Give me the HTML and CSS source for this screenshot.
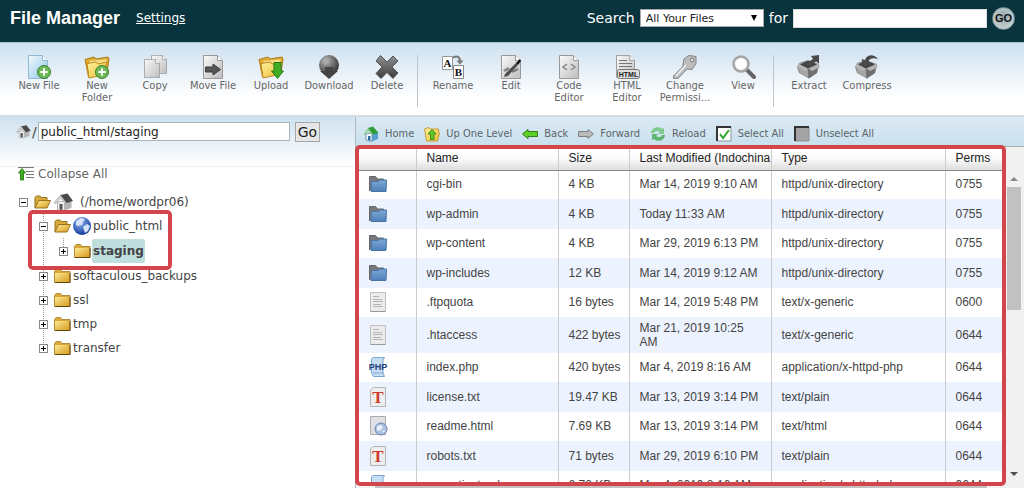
FILE: index.html
```html
<!DOCTYPE html>
<html lang="en">
<head>
  <meta charset="UTF-8">
  <meta name="viewport" content="width=device-width, initial-scale=1.0">
  <title>File Manager</title>
  <link rel="stylesheet" href="styles.css">
</head>
<body>

<!-- Shared icons -->
<svg class="sprite" width="0" height="0" aria-hidden="true">
  <defs>
    <linearGradient id="gold" x1="0" y1="0" x2="1" y2="1"><stop offset="0" stop-color="#fdeb96"/><stop offset="1" stop-color="#d89a1c"/></linearGradient>
    <linearGradient id="yellow" x1="0" y1="0" x2="1" y2="1"><stop offset="0" stop-color="#fff3a0"/><stop offset="1" stop-color="#ecb930"/></linearGradient>
    <linearGradient id="paper" x1="0" y1="0" x2="1" y2="1"><stop offset="0" stop-color="#fafafa"/><stop offset="1" stop-color="#bdbdbd"/></linearGradient>
    <linearGradient id="bluePaper" x1="0" y1="0" x2="1" y2="1"><stop offset="0" stop-color="#f2fafe"/><stop offset="1" stop-color="#8fc6e8"/></linearGradient>
    <linearGradient id="dark" x1="0" y1="0" x2="0" y2="1"><stop offset="0" stop-color="#929292"/><stop offset="1" stop-color="#3c3c3c"/></linearGradient>
    <linearGradient id="blueFolder" x1="0" y1="0" x2="0" y2="1"><stop offset="0" stop-color="#7fa9d8"/><stop offset="1" stop-color="#4d7fb8"/></linearGradient>
    <radialGradient id="ball" cx=".35" cy=".3" r=".7"><stop offset="0" stop-color="#b5b5b5"/><stop offset="1" stop-color="#3a3a3a"/></radialGradient>
    <radialGradient id="earth" cx=".4" cy=".3" r=".7"><stop offset="0" stop-color="#8fb5f5"/><stop offset="1" stop-color="#123a9a"/></radialGradient>

    <symbol id="folder" viewBox="0 0 17 16">
      <path d="M.5 3.5 2 1.5h4.5l1.500 2h8v11H.5z" fill="#d9a93a" stroke="#b58c34"/>
      <path d="M1 5h14.500v9H1z" fill="url(#gold)"/>
      <path d="M16 5v9.500H1" fill="none" stroke="#5d4614"/>
    </symbol>
    <symbol id="folder-open" viewBox="0 0 17 16">
      <path d="M1 14V3.500L2.500 2H6l1.500 1.500H13V6" fill="#d9a93a" stroke="#94701f"/>
      <path d="M1 14 4.500 6.500h12L13 14z" fill="url(#gold)" stroke="#94701f"/>
    </symbol>
    <symbol id="house" viewBox="0 0 20 18">
      <path d="M4 9v8l7 .5V8z" fill="#f2f2f2" stroke="#999" stroke-width=".7"/>
      <path d="M11 17.500 18 15V7l-5-3-2 4z" fill="#b5b5b5"/>
      <path d="M6 11h3v6l-3-.5z" fill="#555"/>
      <path d="M.5 9.500 7 2l6 7.500-1.500 1L7 5l-5 6z" fill="#d5d5d5" stroke="#999" stroke-width=".6"/>
      <path d="M7 2l7-1.500L19.500 8 13 10z" fill="#4a4a4a"/>
    </symbol>
    <symbol id="big-folder" viewBox="0 0 26 24">
      <path d="M1 4.500 10 2l2 2 12-2 1 2-2 14H4z" fill="#e6ac2c" stroke="#a77b1a"/>
      <path d="M5 5.500 23 4l-1 12H6z" fill="#f8df80" stroke="#cba548" stroke-width=".6"/>
      <path d="M3 8.500 12 7l2 2 9-2-4 13-14 3z" fill="url(#yellow)" stroke="#b88a24"/>
      <path d="M1 5l2 3.500L5 22l-1 .5z" fill="#c58c1c"/>
    </symbol>
    <symbol id="plus" viewBox="0 0 15 15">
      <circle cx="7.500" cy="7.500" r="7" fill="#6db855" stroke="#34802a"/>
      <path d="M7.500 3.500v8M3.500 7.500h8" stroke="#fff" stroke-width="2"/>
    </symbol>
    <symbol id="page" viewBox="0 0 20 24">
      <path d="M.5.5h14l5 5v18H.5z" fill="url(#paper)" stroke="#999"/>
      <path d="M14.500.5v5h5" fill="#fff" stroke="#999"/>
    </symbol>
    <symbol id="box" viewBox="0 0 26 24">
      <path d="M1 12 3 8l9-3 11 4v2l-2 7-8 5.500L3 18z" fill="#8c8c8c"/>
      <path d="M2 10 12 14.500V23L4 18z" fill="#a5a5a5"/>
      <path d="M12 14.500 22 10l-1 8-8.500 5.500z" fill="#707070"/>
      <path d="M4 9.500 12 6l8 3-8 4z" fill="#3d3d3d"/>
      <path d="M3 8.500 1 12l8 4 3-3 4 3 8-4-2-3" fill="#b4b4b4"/>
      <path d="M4 9.500 12 6l9 3.500-9 4z" fill="#444"/>
    </symbol>

    <symbol id="dir" viewBox="0 0 20 20">
      <path d="M1.500 17V2.500h6l2 2.500h6V9" fill="#77797c" stroke="#63666a"/>
      <path d="M3.500 7.500h7l1-1.500h7l-.5 11.500H3z" fill="url(#blueFolder)" stroke="#4874a8"/>
    </symbol>
    <symbol id="generic" viewBox="0 0 20 20">
      <path d="M2.500.5h15v19h-15z" fill="#ebebeb" stroke="#c0c0c0"/>
      <path d="M5 4.500h6M5 7.500h9M5 9.500h10M5 12.500h8M5 14.500h10" stroke="#b4b4b4"/>
      <path d="M2.500 19.500h15" stroke="#999"/>
    </symbol>
    <symbol id="php" viewBox="0 0 20 20">
      <path d="M3.500 2 5 .5h11.500L15 3v13l1.500 3.500h-11L3.500 16z" fill="#c6def3" stroke="#7da4cc"/>
      <path d="M5 16h10" stroke="#7da4cc"/>
      <text x="10" y="13" class="php-text">PHP</text>
    </symbol>
    <symbol id="txt" viewBox="0 0 20 20">
      <path d="M2.500 3 5.500.5h12v19h-15z" fill="#eee" stroke="#b5b5b5"/>
      <text x="10" y="16" class="txt-text">T</text>
    </symbol>
    <symbol id="html" viewBox="0 0 20 20">
      <path d="M2.500.5h15v18h-15z" fill="#dfe1e5" stroke="#aaa"/>
      <circle cx="13" cy="13" r="6" fill="#a9bfe0" stroke="#6e86ae"/>
      <path d="M9 10l4-1 2 2-2 3-3 1-1-2zM14 15l3-1-1 3z" fill="#e9f1fb"/>
    </symbol>
  </defs>
</svg>

<header class="header">
  <h1>File Manager</h1>
  <a class="settings" href="#">Settings</a>
  <form class="search">
    <label for="scope">Search</label>
    <span class="select-wrap">
      <select id="scope">
        <option>All Your Files</option>
        <option>Current Directory</option>
      </select>
    </span>
    <label for="query">for</label>
    <input type="text" id="query">
    <button type="button" class="go-round">GO</button>
  </form>
</header>

<nav class="toolbar">
  <button class="tool">
    <svg width="26" height="24" viewBox="0 0 26 24"><path d="M2.500.5h14l5 5v18h-19z" fill="url(#bluePaper)" stroke="#8fb8d2"/><path d="M16.500.5v5h5" fill="#fff" stroke="#8fb8d2"/><use href="#plus" x="11" y="10" width="14" height="14"/></svg>
    New File
  </button>
  <button class="tool">
    <svg width="26" height="24" viewBox="0 0 26 24"><use href="#big-folder" width="26" height="24"/><use href="#plus" x="11" y="10" width="14" height="14"/></svg>
    New Folder
  </button>
  <button class="tool">
    <svg width="26" height="24" viewBox="0 0 26 24"><use href="#page" x="9" y="0" width="16" height="19"/><use href="#page" x="2" y="4" width="16" height="19"/></svg>
    Copy
  </button>
  <button class="tool">
    <svg width="26" height="24" viewBox="0 0 26 24"><use href="#page" x="3" y="0" width="20" height="24"/><path d="M5.500 12H13V9l7.500 5.500L13 20v-3H5.500z" fill="#555" stroke="#3a3a3a"/></svg>
    Move File
  </button>
  <button class="tool">
    <svg width="26" height="24" viewBox="0 0 26 24"><use href="#big-folder" width="26" height="24"/><path d="M16 7.500h7V16h2.500l-6 7.500-6-7.500H16z" fill="#3fae22" stroke="#2b7a16"/></svg>
    Upload
  </button>
  <button class="tool">
    <svg width="26" height="24" viewBox="0 0 26 24"><circle cx="13" cy="10" r="10" fill="url(#ball)"/><path d="M6 5l4-3 4 2-1 4-4 2-2-1z" fill="#aaa" opacity=".6"/><path d="M9 12h8v4h5l-9 8-9-8h5z" fill="#444"/></svg>
    Download
  </button>
  <button class="tool">
    <svg width="26" height="24" viewBox="0 0 26 24"><path d="M6.500.5 13 7l6-6 5 5-6 6 6 6-5 5.500-6-6-6 6-5-5L8 12 2 6z" fill="url(#dark)" stroke="#555"/></svg>
    Delete
  </button>
  <span class="divider"></span>
  <button class="tool">
    <svg width="26" height="24" viewBox="0 0 26 24"><path d="M2.500 1.500h10v13h-10z" fill="#fff" stroke="#999"/><path d="M13.500 10.500h10v13h-10z" fill="#fff" stroke="#888"/><text x="7.500" y="12" class="letter">A</text><text x="18.500" y="21" class="letter">B</text><path d="M13 2.500c4-2 7-1 7 4" fill="none" stroke="#777" stroke-width="2"/><path d="M16.500 5.500h7L20 9.500z" fill="#777"/></svg>
    Rename
  </button>
  <button class="tool">
    <svg width="26" height="24" viewBox="0 0 26 24"><use href="#page" x="3" y="0" width="20" height="24"/><path d="m5 15 5-3 2 2-5 3z" fill="#888"/><path d="M7 19 18 8l2 2-10 11-4 1z" fill="#4c4c4c"/><path d="M14 17l6-3" stroke="#777" stroke-width="2"/><path d="m18 8 4-4 1 2-3 4z" fill="#111"/></svg>
    Edit
  </button>
  <button class="tool">
    <svg width="26" height="24" viewBox="0 0 26 24"><use href="#page" x="3" y="0" width="20" height="24"/><path d="m11 9-4 3 4 3M15 9l4 3-4 3" fill="none" stroke="#888" stroke-width="1.500"/></svg>
    Code Editor
  </button>
  <button class="tool">
    <svg width="26" height="24" viewBox="0 0 26 24"><use href="#page" x="2" y="0" width="19" height="23"/><path d="M5 5.500h8M5 8.500h13M5 11.500h13" stroke="#777"/><rect x="3.500" y="14.500" width="22" height="9" rx="2" fill="#ddd" stroke="#777"/><text x="14.500" y="22" class="html-text">HTML</text></svg>
    HTML Editor
  </button>
  <button class="tool">
    <svg width="26" height="24" viewBox="0 0 26 24"><path d="M12 4 17 .5l7 1v7l-4 6-5-.5-9 9.500-4.500.5v-3l9-9z" fill="#bdbdbd" stroke="#858585"/><path d="M4 21 14 10" stroke="#eee" stroke-width="1.500"/><circle cx="20" cy="5" r="1.800" fill="#e3edf5" stroke="#777"/></svg>
    Change Permissi...
  </button>
  <button class="tool">
    <svg width="26" height="24" viewBox="0 0 26 24"><path d="m17 15 7 7" stroke="#666" stroke-width="4" stroke-linecap="round"/><circle cx="11" cy="9" r="7.500" fill="#f1f6fa" stroke="#a5a5a5" stroke-width="2.500"/><circle cx="11" cy="9" r="5" fill="#fff"/></svg>
    View
  </button>
  <span class="divider"></span>
  <button class="tool">
    <svg width="26" height="24" viewBox="0 0 26 24"><use href="#box" width="26" height="24"/><path d="m9 9 4 2.500 7-5 3 2V0l-8 1 2 3z" fill="#4a4a4a"/></svg>
    Extract
  </button>
  <button class="tool">
    <svg width="26" height="24" viewBox="0 0 26 24"><use href="#box" width="26" height="24"/><path d="M24 4C20-1 13-1 11 5L7.500 4l2 8 8-4-3-1.500c1-3.500 5-4 9.500-2.500z" fill="#4a4a4a"/></svg>
    Compress
  </button>
</nav>

<main class="main">
  <aside class="sidebar">
    <form class="location">
      <svg width="15" height="15"><use href="#house"/></svg>
      <label for="path">/</label>
      <input type="text" id="path" value="public_html/staging">
      <button type="button">Go</button>
    </form>

    <a class="collapse" href="#">
      <svg width="17" height="14" viewBox="0 0 17 14"><path d="M1 .5h16M9 4.500h8M9 7.500h8M9 10.500h8" stroke="#777"/><path d="M5 1.500 8.500 6h-2v7h-3V6h-2z" fill="#3fae22" stroke="#2f8518"/></svg>
      Collapse All
    </a>

    <div class="tree">
      <ul>
        <li>
          <div class="node">
            <button class="toggle" aria-label="Collapse"><svg width="7" height="7"><path d="M1 3.500h5"/></svg></button>
            <svg width="17" height="16"><use href="#folder-open"/></svg>
            <svg width="21" height="18"><use href="#house"/></svg>
            <a class="root" href="#">(/home/wordpr06)</a>
          </div>
          <ul>
            <li>
              <div class="node">
                <button class="toggle" aria-label="Collapse"><svg width="7" height="7"><path d="M1 3.500h5"/></svg></button>
                <svg width="17" height="16"><use href="#folder-open"/></svg>
                <svg width="18" height="18" viewBox="0 0 18 18"><circle cx="9" cy="9" r="9" fill="url(#earth)"/><path d="M3 4l5-3 4 1-2 3-1 3-4 1-2-1zM10 10l4-3 3 2-2 5-3 2z" fill="#d5e4fa"/></svg>
                <a href="#">public_html</a>
              </div>
              <ul>
                <li>
                  <div class="node current">
                    <button class="toggle" aria-label="Expand"><svg width="7" height="7"><path d="M1 3.500h5M3.500 1v5"/></svg></button>
                    <svg width="17" height="16"><use href="#folder"/></svg>
                    <a href="#">staging</a>
                  </div>
                </li>
              </ul>
            </li>
            <li>
              <div class="node">
                <button class="toggle" aria-label="Expand"><svg width="7" height="7"><path d="M1 3.500h5M3.500 1v5"/></svg></button>
                <svg width="17" height="16"><use href="#folder"/></svg>
                <a href="#">softaculous_backups</a>
              </div>
            </li>
            <li>
              <div class="node">
                <button class="toggle" aria-label="Expand"><svg width="7" height="7"><path d="M1 3.500h5M3.500 1v5"/></svg></button>
                <svg width="17" height="16"><use href="#folder"/></svg>
                <a href="#">ssl</a>
              </div>
            </li>
            <li>
              <div class="node">
                <button class="toggle" aria-label="Expand"><svg width="7" height="7"><path d="M1 3.500h5M3.500 1v5"/></svg></button>
                <svg width="17" height="16"><use href="#folder"/></svg>
                <a href="#">tmp</a>
              </div>
            </li>
            <li>
              <div class="node">
                <button class="toggle" aria-label="Expand"><svg width="7" height="7"><path d="M1 3.500h5M3.500 1v5"/></svg></button>
                <svg width="17" height="16"><use href="#folder"/></svg>
                <a href="#">transfer</a>
              </div>
            </li>
          </ul>
        </li>
      </ul>
      <div class="highlight tree-highlight"></div>
    </div>
  </aside>

  <section class="files">
    <nav class="actions">
      <a href="#"><svg width="16" height="16" viewBox="0 0 16 16"><path d="M3 8v6l6 1.500V7z" fill="#fff" stroke="#6c9ab8"/><path d="M9 15.500 15 13V6l-4-2-2 4z" fill="#5a9fd0"/><path d="M5 10h2.500v5L5 14z" fill="#2d6ea0"/><path d="M.5 8 5 2l5 6.500-1.500.5L5 5 1.500 9z" fill="#8fd08a"/><path d="m5 2 5-1.500L15.500 7 10 8.500z" fill="#2f9a3a"/></svg>Home</a>
      <a href="#"><svg width="16" height="16" viewBox="0 0 16 16"><path d="M.5 3 5 1.500 6.500 3h8v3l1 1-2 8h-11z" fill="url(#yellow)" stroke="#c49a34"/><path d="M8 3.500 12 8h-2v5.500H6.500V8H4z" fill="#62c72a" stroke="#3a8d17"/></svg>Up One Level</a>
      <a href="#"><svg width="16" height="16" viewBox="0 0 16 16"><path d="M.5 8 6 3.500v2h9.500v5H6v2z" fill="#5fd028" stroke="#2b7d14"/></svg>Back</a>
      <a href="#"><svg width="16" height="16" viewBox="0 0 16 16"><path d="M15.500 8 10 3.500v2H.5v5H10v2z" fill="#bbb" stroke="#808080"/></svg>Forward</a>
      <a href="#"><svg width="16" height="16" viewBox="0 0 16 16"><path d="M1 7C1 2 8-1 12 3l2-1v6H8l2-2C7 4 5 5 4 7z" fill="#7fca8c"/><path d="M15 9c0 5-7 8-11 4l-2 1V8h6l-2 2c3 2 5 1 6-1z" fill="#5fb573"/></svg>Reload</a>
      <a href="#"><svg width="16" height="16" viewBox="0 0 16 16"><path d="M1 1h14v14H1z" fill="#fff" stroke="#8a959c"/><path d="M1 15V1h14" fill="none" stroke="#333" stroke-width="2"/><path d="m4 8 3 4 6-8" fill="none" stroke="#2fa52f" stroke-width="2"/></svg>Select All</a>
      <a href="#"><svg width="16" height="16" viewBox="0 0 16 16"><path d="M1 1h14v14H1z" fill="#a3a3a3" stroke="#8f8f8f"/><path d="M1 15V1h14" fill="none" stroke="#333" stroke-width="2"/></svg>Unselect All</a>
    </nav>

    <div class="list">
      <div class="list-view">
        <table>
          <colgroup>
            <col class="col-icon"><col class="col-name"><col class="col-size"><col class="col-date"><col class="col-type"><col>
          </colgroup>
          <thead>
            <tr><th></th><th>Name</th><th>Size</th><th>Last Modified (Indochina</th><th>Type</th><th>Perms</th></tr>
          </thead>
          <tbody>
            <tr><td><svg width="20" height="20"><use href="#dir"/></svg></td><td>cgi-bin</td><td>4 KB</td><td>Mar 14, 2019 9:10 AM</td><td>httpd/unix-directory</td><td>0755</td></tr>
            <tr><td><svg width="20" height="20"><use href="#dir"/></svg></td><td>wp-admin</td><td>4 KB</td><td>Today 11:33 AM</td><td>httpd/unix-directory</td><td>0755</td></tr>
            <tr><td><svg width="20" height="20"><use href="#dir"/></svg></td><td>wp-content</td><td>4 KB</td><td>Mar 29, 2019 6:13 PM</td><td>httpd/unix-directory</td><td>0755</td></tr>
            <tr><td><svg width="20" height="20"><use href="#dir"/></svg></td><td>wp-includes</td><td>12 KB</td><td>Mar 14, 2019 9:12 AM</td><td>httpd/unix-directory</td><td>0755</td></tr>
            <tr><td><svg width="20" height="20"><use href="#generic"/></svg></td><td>.ftpquota</td><td>16 bytes</td><td>Mar 14, 2019 5:48 PM</td><td>text/x-generic</td><td>0600</td></tr>
            <tr><td><svg width="20" height="20"><use href="#generic"/></svg></td><td>.htaccess</td><td>422 bytes</td><td>Mar 21, 2019 10:25 AM</td><td>text/x-generic</td><td>0644</td></tr>
            <tr><td><svg width="20" height="20"><use href="#php"/></svg></td><td>index.php</td><td>420 bytes</td><td>Mar 4, 2019 8:16 AM</td><td>application/x-httpd-php</td><td>0644</td></tr>
            <tr><td><svg width="20" height="20"><use href="#txt"/></svg></td><td>license.txt</td><td>19.47 KB</td><td>Mar 13, 2019 3:14 PM</td><td>text/plain</td><td>0644</td></tr>
            <tr><td><svg width="20" height="20"><use href="#html"/></svg></td><td>readme.html</td><td>7.69 KB</td><td>Mar 13, 2019 3:14 PM</td><td>text/html</td><td>0644</td></tr>
            <tr><td><svg width="20" height="20"><use href="#txt"/></svg></td><td>robots.txt</td><td>71 bytes</td><td>Mar 29, 2019 6:10 PM</td><td>text/plain</td><td>0644</td></tr>
            <tr><td><svg width="20" height="20"><use href="#php"/></svg></td><td>wp-activate.php</td><td>6.72 KB</td><td>Mar 4, 2019 8:16 AM</td><td>application/x-httpd-php</td><td>0644</td></tr>
          </tbody>
        </table>
      </div>
      <div class="vbar">
        <span class="arrow up"></span>
        <span class="track"><span class="thumb"></span></span>
        <span class="arrow down"></span>
      </div>
      <div class="hbar"><span class="thumb"></span></div>
      <div class="highlight list-highlight"></div>
    </div>
  </section>
</main>

</body>
</html>
```
FILE: styles.css
```css
* {
  box-sizing: border-box;
}

body {
  margin: 0;
  height: 100vh;
  display: flex;
  flex-direction: column;
  overflow: hidden;
  background: #fff;
  color: #444;
  font-family: Verdana, "DejaVu Sans", sans-serif;
  font-size: 12px;
}

button, input, select {
  font-family: inherit;
}

a {
  color: inherit;
  text-decoration: none;
}

svg {
  flex: none;
  display: block;
}

.sprite {
  position: absolute;
}

/* Header */
.header {
  display: flex;
  align-items: center;
  height: 42px;
  flex: none;
  padding: 0 9px 6px 10px;
  background: #0a343d;
  color: #fff;
}

.header h1 {
  margin: 0;
  font-family: "Liberation Sans", Arial, sans-serif;
  font-size: 18px;
}

.settings {
  margin-left: 16px;
  text-decoration: underline;
}

.search {
  display: flex;
  align-items: center;
  margin-left: auto;
  gap: 5px;
  font-size: 14px;
}

.select-wrap {
  position: relative;
  display: flex;
}

.select-wrap::after {
  content: "";
  position: absolute;
  right: 7px;
  top: 6px;
  border: 3px solid transparent;
  border-top: 6px solid #000;
  border-bottom: 0;
}

.search select {
  appearance: none;
  width: 124px;
  height: 18px;
  padding: 0 5px;
  border: 1px solid #a9a9a9;
  border-radius: 0;
  background: #fff;
  color: #222;
  font-size: 11px;
}

.search input {
  width: 194px;
  height: 19px;
  border: 1px solid #ddd;
  background: #fff;
}

.go-round {
  width: 23px;
  height: 23px;
  padding: 0;
  border: 1px solid #6d8a90;
  border-radius: 50%;
  background: radial-gradient(circle at 50% 40%, #96a9ad, #d3dee0);
  color: #111;
  font-family: "Liberation Sans", Arial, sans-serif;
  font-size: 11px;
  font-weight: bold;
}

/* Main toolbar */
.toolbar {
  display: flex;
  height: 75px;
  flex: none;
  padding: 12px 10px 0;
  border-top: 1px solid #a9c3cf;
  border-bottom: 2px solid #d3dce3;
  background: linear-gradient(#cde0f0, #fff 75%);
}

.tool {
  display: flex;
  flex-direction: column;
  align-items: center;
  gap: 1px;
  width: 58px;
  padding: 0 2px;
  border: 0;
  background: none;
  color: #666;
  font-family: Tahoma, "DejaVu Sans Condensed", "DejaVu Sans", sans-serif;
  font-size: 11px;
  line-height: 12px;
  cursor: pointer;
}

.divider {
  width: 1px;
  height: 52px;
  margin: 0 6px 0 1px;
  background: #bcc6cd;
}

/* Two panes */
.main {
  display: grid;
  grid-template-columns: 355px 1fr;
  flex: 1;
  min-height: 0;
}

.location {
  display: flex;
  align-items: center;
  height: 50px;
  padding: 0 0 20px 16px;
  border-bottom: 1px solid #eef2f5;
  background: linear-gradient(#cfe2f0, #fff);
}

.location label {
  margin: 0 1px;
  font-size: 14px;
}

.location input {
  width: 252px;
  height: 19px;
  padding: 0 2px;
  border: 1px solid #a9b4bb;
  color: #222;
  font-size: 12px;
}

.location button {
  height: 20px;
  margin-left: 5px;
  padding: 0 2px;
  border: 1px solid #a6a6a6;
  background: #e6e6e6;
  color: #222;
  font-size: 14px;
  line-height: 18px;
}

.collapse {
  display: flex;
  gap: 4px;
  margin: 0 0 9px 17px;
  color: #666;
  line-height: 14px;
}

/* Folder tree */
.tree {
  position: relative;
  padding-left: 19px;
}

.tree ul {
  margin: 0;
  padding: 0;
  list-style: none;
}

.tree ul ul {
  padding-left: 20px;
  background: repeating-linear-gradient(#999 0 1px, #fff 1px 2px) 24px 0 / 1px calc(100% - 12px) no-repeat;
}

.node {
  display: flex;
  align-items: center;
  height: 24px;
  gap: 2px;
}

.node .root {
  margin-left: 4px;
}

.toggle {
  width: 9px;
  height: 9px;
  margin-right: 4px;
  padding: 0;
  border: 1px solid #888;
  background: #fff;
}

.toggle path {
  stroke: #000;
}

.node.current {
  height: 26px;
}

.current a {
  margin-left: -1px;
  padding: 0 1px;
  border-radius: 2px;
  background: #bfdfdf;
  font-weight: bold;
  line-height: 24px;
}

.highlight {
  position: absolute;
  border: 4px solid #d2454a;
  border-radius: 5px;
  pointer-events: none;
}

.tree-highlight {
  left: 28px;
  top: 20px;
  width: 144px;
  height: 60px;
}

/* File list */
.files {
  display: flex;
  flex-direction: column;
  min-width: 0;
  min-height: 0;
  border-left: 1px solid #a9b8c2;
}

.actions {
  display: flex;
  align-items: center;
  gap: 10px;
  height: 29px;
  flex: none;
  padding: 4px 0 0 7px;
  background: linear-gradient(#dbe9f3, #c9e0ee);
  color: #5d6468;
  font-family: Tahoma, "DejaVu Sans Condensed", "DejaVu Sans", sans-serif;
  font-size: 11px;
}

.actions a {
  display: flex;
  align-items: center;
  gap: 6px;
}

.list {
  position: relative;
  display: grid;
  grid-template-columns: 1fr 20px;
  grid-template-rows: 1fr 4px;
  flex: 1;
  min-height: 0;
  border-top: 1px solid #aaa;
}

.list-view {
  overflow: hidden;
}

table {
  width: 100%;
  table-layout: fixed;
  border-collapse: collapse;
  font-family: "Liberation Sans", Arial, sans-serif;
  font-size: 12px;
  line-height: 14px;
}

.col-icon {
  width: 60px;
}

.col-name,
.col-date {
  width: 142px;
}

.col-size {
  width: 71px;
}

.col-type {
  width: 174px;
}

th, td {
  padding: 0 0 0 10px;
  border-right: 1px solid #ccc;
  text-align: left;
}

th:last-child,
td:last-child {
  border-right: 0;
}

th {
  height: 23px;
  border-bottom: 1px solid #888;
  background: linear-gradient(#fff, #fafafa 50%, #ddd);
  color: #222;
  font-weight: normal;
  white-space: nowrap;
}

td {
  height: 29px;
  padding: 2px 10px 4px;
}

td:first-child {
  padding-left: 12px;
}

td:nth-child(3) {
  white-space: nowrap;
}

tr:nth-child(even) td {
  height: 30px;
  padding-top: 4px;
  background: #edf3fe;
}

.php-text {
  font: bold 9px "Liberation Sans", Arial, sans-serif;
  fill: #1f3f78;
  text-anchor: middle;
}

.txt-text {
  font: bold 17px "Liberation Serif", serif;
  fill: #d03a2c;
  text-anchor: middle;
}

.letter {
  font: bold 11px "Liberation Serif", serif;
  fill: #111;
  text-anchor: middle;
}

.html-text {
  font: bold 7px "Liberation Sans", Arial, sans-serif;
  fill: #222;
  text-anchor: middle;
}

/* Scrollbars */
.vbar {
  display: flex;
  flex-direction: column;
  align-items: center;
  padding: 30px 0 8px;
  background: #f1f1f1;
}

.track {
  flex: 1;
  width: 14px;
  margin: 6px 0;
}

.vbar .thumb {
  display: block;
  height: 44%;
  background: #c1c1c1;
}

.arrow {
  border: 4px solid transparent;
}

.up {
  border-top: 0;
  border-bottom-color: #8a8a8a;
}

.down {
  border-bottom: 0;
  border-top-color: #505050;
}

.hbar {
  grid-column: 1 / 3;
  padding: 0 37px 0 19px;
  background: #f1f1f1;
}

.hbar .thumb {
  display: block;
  height: 4px;
  background: #c1c1c1;
}

.list-highlight {
  inset: -2px 18px 2px -1px;
}
```
